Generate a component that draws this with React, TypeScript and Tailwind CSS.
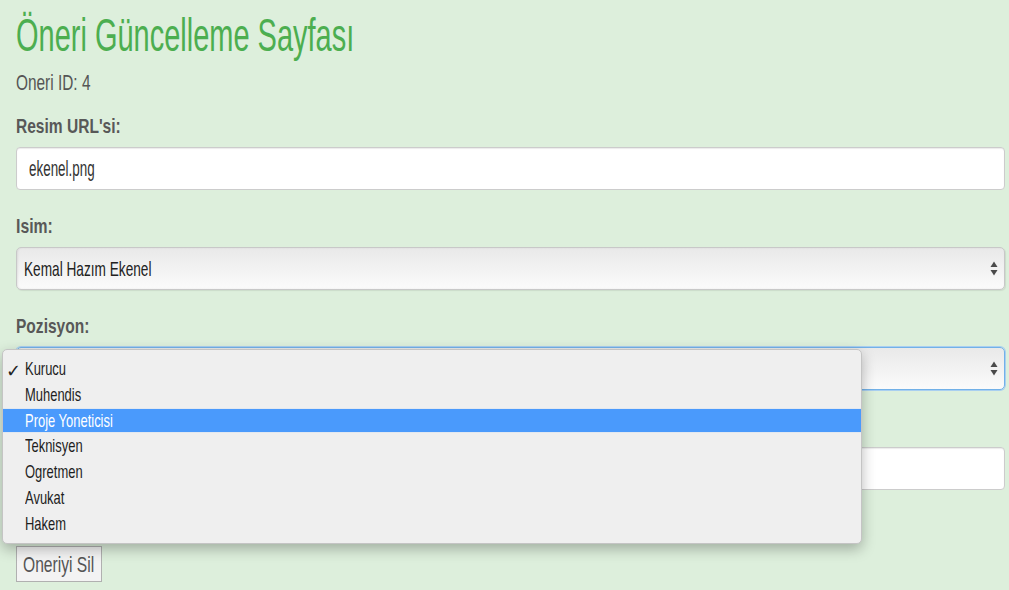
import React from "react";

function Arrows() {
  return (
    <svg width="8" height="15" viewBox="0 0 8 15" className="shrink-0">
      <path d="M4 0.5 L7.5 6 L0.5 6 Z" fill="#4a4a4a" />
      <path d="M0.5 9 L7.5 9 L4 14.5 Z" fill="#4a4a4a" />
    </svg>
  );
}

const items = ["Kurucu", "Muhendis", "Proje Yoneticisi", "Teknisyen", "Ogretmen", "Avukat", "Hakem"];

export default function App() {
  return (
    <div className="min-h-[590px] bg-[#ddefdc] pl-4 pr-1 font-['Liberation_Sans',Arial,sans-serif] text-[#555]">
      <div className="pt-[10px]">
        <h1 className="h-[50px] text-[46px] leading-[50px] font-normal text-[#4cae50]">
          <span className="inline-block origin-left scale-x-[0.63] whitespace-nowrap">Öneri Güncelleme Sayfası</span>
        </h1>
      </div>

      <div className="mt-[11px] h-[24px] text-[22px] leading-[24px]">
        <span className="inline-block origin-left scale-x-[0.70] whitespace-nowrap">Oneri ID: 4</span>
      </div>

      <div className="mt-[19px] h-[24px] text-[21px] leading-[24px] font-bold text-[#585858]">
        <span className="inline-block origin-left scale-x-[0.74] whitespace-nowrap">Resim URL'si:</span>
      </div>
      <div className="mt-[9px] flex h-[43px] items-center rounded-[4px] border border-[#cccccc] bg-white pl-[12px] shadow-[inset_0_1px_1px_rgba(0,0,0,0.08)]">
        <span className="inline-block origin-left scale-x-[0.61] whitespace-nowrap text-[22px] text-[#333]">ekenel.png</span>
      </div>

      <div className="mt-[24px] h-[24px] text-[21px] leading-[24px] font-bold text-[#585858]">
        <span className="inline-block origin-left scale-x-[0.75] whitespace-nowrap">Isim:</span>
      </div>
      <div className="mt-[9px] flex h-[43px] items-center justify-between rounded-[5px] border border-[#c8c8c8] bg-linear-to-b from-[#e9e9e9] to-[#fbfbfb] pl-[7px] pr-[6px] shadow-[inset_1px_0_2px_rgba(0,0,0,0.08),1px_1px_1px_rgba(0,0,0,0.08)]">
        <span className="inline-block origin-left scale-x-[0.65] whitespace-nowrap text-[21px] text-[#222]">Kemal Hazım Ekenel</span>
        <Arrows />
      </div>

      <div className="mt-[24px] h-[24px] text-[21px] leading-[24px] font-bold text-[#585858]">
        <span className="inline-block origin-left scale-x-[0.74] whitespace-nowrap">Pozisyon:</span>
      </div>
      <div className="relative mt-[9px]">
        <div className="flex h-[43px] items-center justify-end rounded-[5px] border border-[#72b1e8] bg-linear-to-b from-[#e9e9e9] to-[#fbfbfb] pl-[7px] pr-[6px] shadow-[0_0_0_1px_#a9cff0]">
          <Arrows />
        </div>

        <div className="absolute left-[-14px] top-[2px] z-10 w-[860px] rounded-[5px] border border-[#c4c4c4] bg-[#efefef] py-[6px] shadow-[0_5px_14px_rgba(0,0,0,0.28)]">
          {items.map((it, i) => (
            <div
              key={it}
              className={
                i === 2
                  ? "relative flex h-[25.8px] items-center border-y border-[#e2e8f0] bg-[#4a9afc] pl-[22px] text-white"
                  : "relative flex h-[25.8px] items-center pl-[22px] text-[#1e1e1e]"
              }
            >
              {i === 0 && (
                <span className="absolute left-[3px] top-[1px] text-[18px] font-bold font-['DejaVu_Sans',sans-serif] text-[#222]">✓</span>
              )}
              <span className="inline-block origin-left scale-x-[0.70] whitespace-nowrap text-[18.5px]">{it}</span>
            </div>
          ))}
        </div>
      </div>

      <div className="mt-[24px] h-[24px]" />
      <div className="mt-[9px] h-[43px] rounded-[4px] border border-[#cccccc] bg-white shadow-[inset_0_1px_1px_rgba(0,0,0,0.08)]" />

      <div className="mt-[18px] h-[36px] w-[131px] border border-[#b0b0b0] bg-[#f3f3f3]" />
      <div className="mt-[2px] flex h-[36px] w-[86px] items-center border border-[#b0b0b0] bg-[#f3f3f3] pl-[6px]">
        <span className="inline-block origin-left scale-x-[0.71] whitespace-nowrap text-[22px]">Oneriyi Sil</span>
      </div>
    </div>
  );
}
